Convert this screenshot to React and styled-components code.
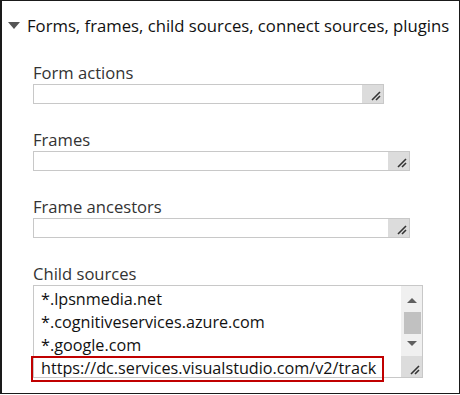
import React from 'react'
import styled, { createGlobalStyle } from 'styled-components'

const GlobalStyle = createGlobalStyle`
  html, body { margin: 0; padding: 0; background: #fff; }
  body { font-family: "Open Sans", "Noto Sans", sans-serif; }
`

const Frame = styled.div`
  box-sizing: border-box;
  width: 460px;
  height: 394px;
  border: 1px solid #1a1a1a;
  border-left-width: 2px;
  overflow: hidden;
`

const Header = styled.div`
  display: flex;
  align-items: center;
  gap: 7px;
  padding: 11px 0 0 6px;
  height: 26px;
  font-size: 16.7px;
  color: #111;
  white-space: nowrap;
`

const Caret = styled.span`
  width: 0;
  height: 0;
  border-left: 6px solid transparent;
  border-right: 6px solid transparent;
  border-top: 7px solid #555;
  margin-top: 1px;
`

const Body = styled.div`
  padding: 25px 0 0 31px;
  display: flex;
  flex-direction: column;
  gap: 26px;
`

const Field = styled.div`
  display: flex;
  flex-direction: column;
  gap: 1px;
`

const Label = styled.div`
  font-size: 16.6px;
  line-height: 20px;
  color: #333;
`

const Box = styled.div`
  position: relative;
  box-sizing: border-box;
  width: ${p => p.$w}px;
  height: ${p => p.$h}px;
  border: 1px solid #c8c8c8;
  display: flex;
  background: #fff;
`

const Content = styled.div`
  flex: 1;
  overflow: hidden;
  padding: 0 0 0 7px;
  font-size: 16.2px;
  line-height: 23px;
  color: #111;
`

const Lines = styled.div`
  margin-top: -21px;
`

const Line = styled.div`
  white-space: nowrap;
`

const Highlight = styled.div`
  position: absolute;
  left: -3px;
  top: 70px;
  width: 353px;
  height: 26px;
  box-sizing: border-box;
  border: 2px solid #c00000;
  pointer-events: none;
`

const Side = styled.div`
  width: 21px;
  display: flex;
  flex-direction: column;
  background: #f0f0f0;
`

const Corner = styled.div`
  margin-top: auto;
  height: ${p => p.$h}px;
  background: #dcdcdc;
  display: flex;
  align-items: flex-end;
  justify-content: flex-end;
  padding: 0 2px 2px 0;
  box-sizing: border-box;
`

const Arrow = styled.div`
  height: 17px;
  display: flex;
  align-items: ${p => (p.$up ? 'flex-end' : 'flex-start')};
  justify-content: center;
  &::before {
    content: '';
    border-left: 5px solid transparent;
    border-right: 5px solid transparent;
    ${p => (p.$up ? 'border-bottom: 5px solid #606060;' : 'border-top: 5px solid #606060; margin-top: 2px;')}
  }
`

const Track = styled.div`
  height: 36px;
  display: flex;
  flex-direction: column;
  padding: 9px 1px 0 3px;
  box-sizing: border-box;
`

const Thumb = styled.div`
  height: 22px;
  background: #c1c1c1;
`

const Grip = () => (
  <svg width="11" height="11" viewBox="0 0 11 11">
    <path d="M2 10 L10 2 M6 10 L10 6" stroke="#333" strokeWidth="1.6" />
  </svg>
)

const InputField = ({ label, width }) => (
  <Field>
    <Label>{label}</Label>
    <Box $w={width} $h={20}>
      <Content />
      <Side>
        <Corner $h={18}>
          <Grip />
        </Corner>
      </Side>
    </Box>
  </Field>
)

export default function App() {
  return (
    <>
      <GlobalStyle />
      <Frame>
        <Header>
          <Caret />
          <span>Forms, frames, child sources, connect sources, plugins</span>
        </Header>
        <Body>
          <InputField label="Form actions" width={351} />
          <InputField label="Frames" width={377} />
          <InputField label="Frame ancestors" width={377} />
          <Field>
            <Label>Child sources</Label>
            <Box $w={390} $h={93}>
              <Content>
                <Lines>
                  <Line>*.hotjar.com</Line>
                  <Line>*.lpsnmedia.net</Line>
                  <Line>*.cognitiveservices.azure.com</Line>
                  <Line>*.google.com</Line>
                  <Line>https://dc.services.visualstudio.com/v2/track</Line>
                </Lines>
              </Content>
              <Side>
                <Arrow $up />
                <Track>
                  <Thumb />
                </Track>
                <Arrow />
                <Corner $h={21}>
                  <Grip />
                </Corner>
              </Side>
              <Highlight />
            </Box>
          </Field>
        </Body>
      </Frame>
    </>
  )
}
